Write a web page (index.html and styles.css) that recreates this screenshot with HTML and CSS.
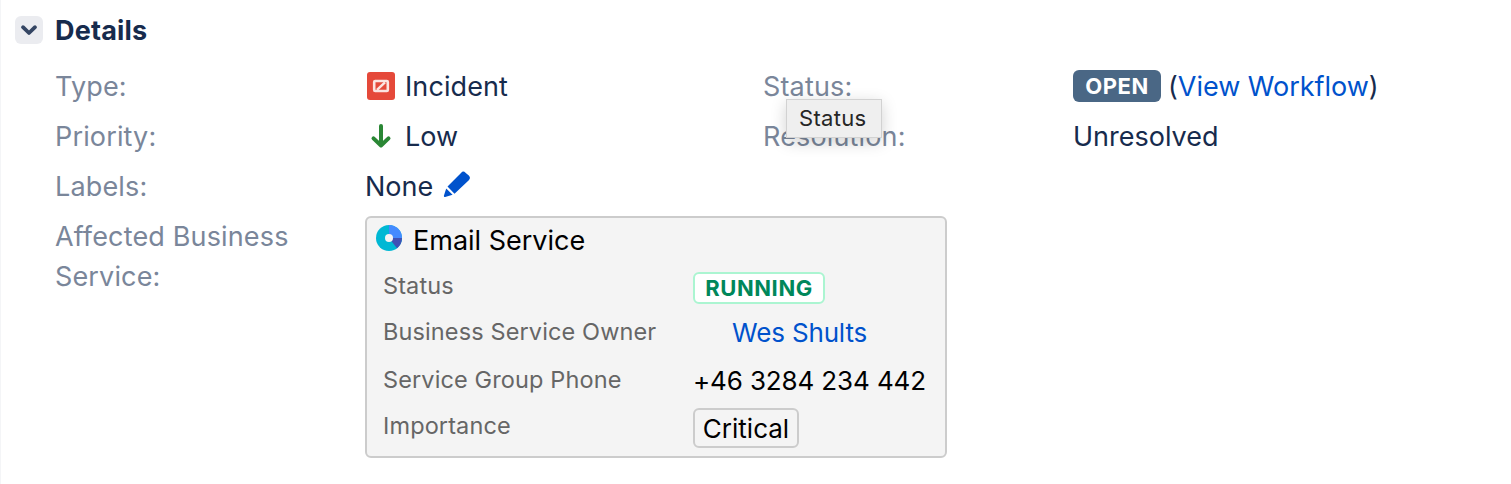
FILE: index.html
```
<!DOCTYPE html>
<html lang="en">

<head>
    <meta charset="UTF-8">
    <title>Details</title>
    <link rel="stylesheet" href="styles.css">
</head>

<body>
    <div class="module">
        <div class="module-header">
            <button class="toggle" aria-label="Details">
                <svg width="28" height="28" viewBox="0 0 28 28"><path d="M8 11.2l6 5.8 6-5.8" fill="none" stroke="#344563" stroke-width="3.8" stroke-linecap="round" stroke-linejoin="round"/></svg>
            </button>
            <h2>Details</h2>
        </div>

        <div class="details">
            <div class="name">Type:</div>
            <div class="value">
                <svg class="icon" width="32" height="32" viewBox="0 0 32 32">
                    <rect x="2" y="2" width="28" height="28" rx="3" fill="#e5493a"/>
                    <rect x="9.2" y="11" width="13.6" height="10" rx="1" fill="none" stroke="#fbe4e1" stroke-width="2.6"/>
                    <path d="M12 19.8l8-7.4" stroke="#fbe4e1" stroke-width="2.4"/>
                </svg>
                <span class="type">Incident</span>
            </div>
            <div class="name">Status:<span class="tooltip">Status</span></div>
            <div class="value">
                <span class="lozenge">OPEN</span>
                <span class="workflow">(<a href="#">View Workflow</a>)</span>
            </div>

            <div class="name">Priority:</div>
            <div class="value">
                <svg class="icon" width="32" height="32" viewBox="0 0 32 32"><path d="M16 6v19M8.5 18.4l7.5 7.1 7.5-7.1" fill="none" stroke="#2a8735" stroke-width="4" stroke-linecap="round" stroke-linejoin="round"/></svg>
                <span>Low</span>
            </div>
            <div class="name">Resolution:</div>
            <div class="value">Unresolved</div>

            <div class="name">Labels:</div>
            <div class="value labels">
                <span>None</span>
                <svg width="28" height="28" viewBox="0 0 28 28">
                    <path d="M4.5 16.5L18 3Q20.2.4 22.5 2.7L25.8 5.5Q28.1 7.8 25.8 10.2L11.5 23.7Z" fill="#0052cc"/>
                    <path d="M3.2 18.4L9.6 24.8 2.2 27Q.7 27.4.9 25.7Z" fill="#0052cc"/>
                </svg>
            </div>

            <div class="name affected">Affected Business Service:</div>
            <div class="service">
                <div class="service-title">
                    <svg width="28" height="28" viewBox="0 0 28 28">
                        <circle cx="14" cy="14" r="13" fill="#00b8d4"/>
                        <path d="M14 14V1A13 13 0 0 1 27 14Z" fill="#448aff"/>
                        <path d="M14 14H27A13 13 0 0 1 22 24.2Z" fill="#3f51b5"/>
                        <circle cx="14" cy="14" r="4" fill="#f4f4f4"/>
                    </svg>
                    <span>Email Service</span>
                </div>
                <div class="attributes">
                    <div class="attr">Status</div>
                    <div><span class="running">RUNNING</span></div>
                    <div class="attr">Business Service Owner</div>
                    <div class="owner"><a href="#">Wes Shults</a></div>
                    <div class="attr">Service Group Phone</div>
                    <div class="phone">+46 3284 234 442</div>
                    <div class="attr">Importance</div>
                    <div><span class="critical">Critical</span></div>
                </div>
            </div>
        </div>
    </div>
</body>

</html>
```
FILE: styles.css
```
body,
h2 {
    margin: 0;
    padding: 0;
}

body {
    background: #fff;
    font-family: Inter, "Liberation Sans", sans-serif;
    font-size: 27px;
    line-height: 40px;
    color: #172b4d;
}

a {
    color: #0052cc;
    text-decoration: none;
}

svg {
    display: block;
    flex: none;
}

.module {
    box-sizing: border-box;
    height: 484px;
    padding: 10px 0 0 14px;
    border-left: 1px solid #f4f5f7;
}

.module-header {
    display: flex;
    align-items: center;
    gap: 12px;
    height: 40px;
}

.toggle {
    width: 28px;
    height: 28px;
    padding: 0;
    border: 0;
    border-radius: 6px;
    background: #ebecf0;
}

.module-header h2 {
    padding-top: 2px;
    font-size: 27px;
    font-weight: 650;
    letter-spacing: 0.2px;
}

.details {
    display: grid;
    grid-template-columns: 310px 398px 310px 1fr;
    row-gap: 10px;
    padding: 17px 0 0 40px;
}

.name {
    position: relative;
    color: #7a869a;
    letter-spacing: 0.15px;
}

.value {
    display: flex;
    align-items: center;
    white-space: nowrap;
}

.icon {
    margin: -2px 8px 0 0;
}

.type {
    letter-spacing: 0.1px;
}

.workflow {
    letter-spacing: -0.03px;
}

.labels {
    grid-column: 2 / 5;
}

.labels svg {
    margin: -6px 0 0 10px;
}

.affected {
    width: 260px;
}

.tooltip {
    position: absolute;
    left: 23px;
    top: 32px;
    z-index: 1;
    width: 96px;
    height: 39px;
    box-sizing: border-box;
    border: 1px solid #d2d2d2;
    background: #efefef;
    box-shadow: 0 4px 16px rgba(0, 0, 0, 0.18);
    color: #262626;
    font-size: 22px;
    line-height: 37px;
    letter-spacing: 0.3px;
    padding-left: 12px;
}

.lozenge {
    width: 88px;
    height: 32px;
    margin: -2px 7px 0 0;
    border-radius: 6px;
    background: #4a6785;
    color: #fff;
    font-size: 22px;
    font-weight: 700;
    letter-spacing: 0.6px;
    line-height: 33px;
    text-align: center;
}

.service {
    grid-column: 2 / 5;
    box-sizing: border-box;
    width: 582px;
    height: 242px;
    margin-top: -1px;
    border: 2px solid #ccc;
    border-radius: 6px;
    background: #f4f4f4;
    color: #000;
}

.service-title {
    display: flex;
    align-items: center;
    gap: 10px;
    height: 45px;
    padding-left: 8px;
}

.service-title svg {
    margin-top: -5px;
}

.attributes {
    display: grid;
    grid-template-columns: 310px 1fr;
    grid-template-rows: 46px 48px 46px 47px;
    padding-left: 16px;
    white-space: nowrap;
}

.attr {
    padding-top: 3px;
    color: #666;
    font-size: 23.5px;
    letter-spacing: 0.12px;
}

.running {
    display: block;
    box-sizing: border-box;
    width: 132px;
    height: 32px;
    margin-top: 9px;
    border: 2px solid #abf5d1;
    border-radius: 6px;
    background: #fff;
    color: #00875a;
    font-size: 22px;
    font-weight: 700;
    letter-spacing: 0.6px;
    line-height: 29px;
    text-align: center;
}

.owner {
    padding: 4px 0 0 39px;
    font-size: 26px;
    letter-spacing: -0.15px;
}

.phone {
    padding-top: 4px;
    font-size: 26px;
    letter-spacing: -0.13px;
}

.critical {
    display: block;
    box-sizing: border-box;
    width: 106px;
    height: 40px;
    margin-top: 5px;
    border: 2px solid #ccc;
    border-radius: 6px;
    font-size: 26px;
    line-height: 38px;
    text-align: center;
}
```
